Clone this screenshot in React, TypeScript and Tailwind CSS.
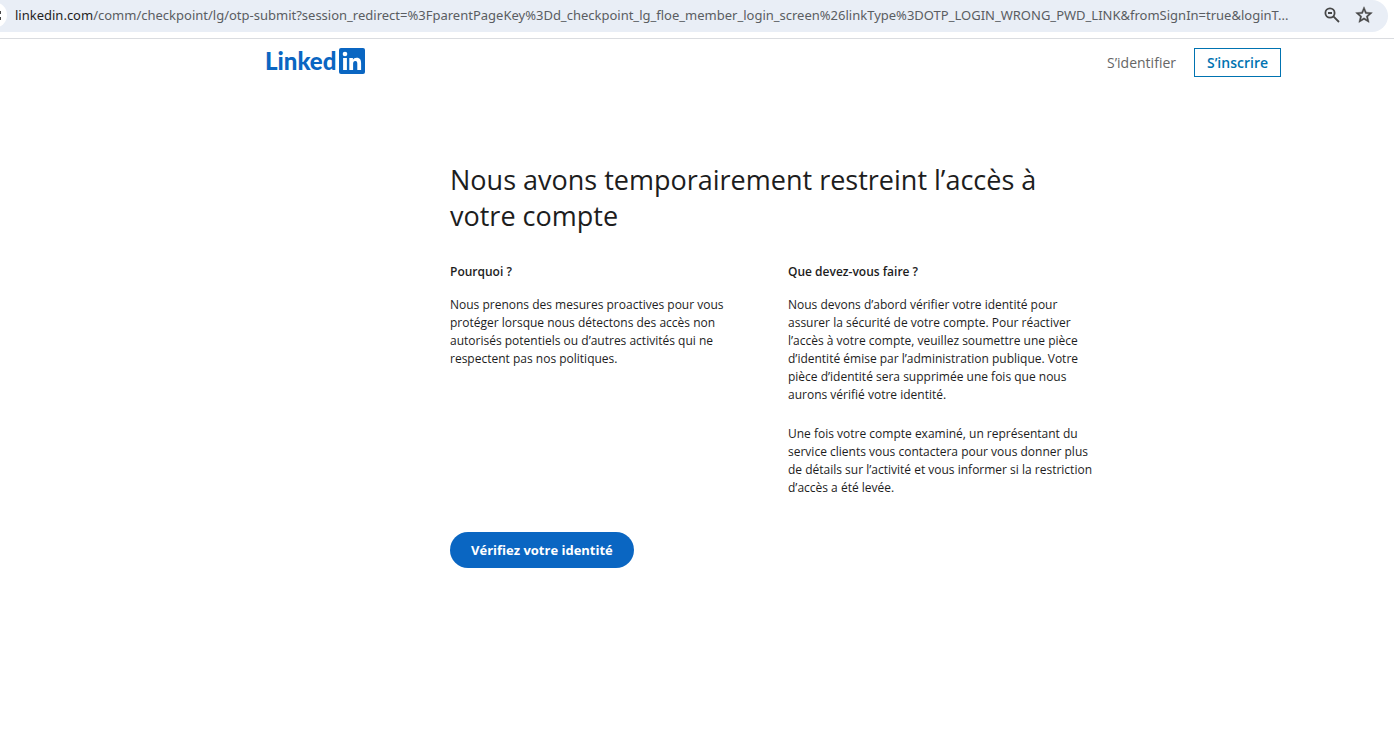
import React from "react";

function LinkedInLogo() {
  return (
    <a href="#" aria-label="LinkedIn" className="flex items-center gap-[3px] text-[#0a66c2]">
      <span className="font-['Lato',sans-serif] text-[24px] leading-[26px] font-black">Linked</span>
      <svg viewBox="0 0 26 26" className="h-[26px] w-[26px]" aria-hidden="true">
        <rect width="26" height="26" rx="2" fill="currentColor" />
        <circle cx="6" cy="6" r="2.3" fill="#fff" />
        <rect x="4.1" y="10" width="3.8" height="12" fill="#fff" />
        <path
          d="M10.3 10h3.6v1.7c.6-1.100 1.900-2 3.700-2 3.700 0 4.500 2.400 4.500 5.600V22h-3.800v-5.900c0-1.400-.1-3.200-2-3.200s-2.200 1.500-2.200 3.100v6h-3.800z"
          fill="#fff"
        />
      </svg>
    </a>
  );
}

function AddressBar() {
  return (
    <div className="border-b border-[#dadce0] pr-[6px] pb-[6px]">
      <div className="flex h-8 items-center rounded-r-full bg-[#e9eef6] pr-[14px] pb-[2px]">
        <svg viewBox="0 0 7 26" className="h-[26px] w-[7px] shrink-0" aria-hidden="true">
          <circle cx="-6" cy="13" r="13" fill="#fff" />
          <path d="M0 9h1v3H0zM0 15h1v3H0z" fill="#474747" />
        </svg>
        <div className="ml-2 flex min-w-0 flex-1 items-center font-['Noto_Sans',sans-serif] text-[13px] leading-5">
          <label htmlFor="url" className="shrink-0 text-[#1f1f1f]">
            linkedin.com
          </label>
          <input
            id="url"
            type="text"
            readOnly
            className="min-w-0 flex-1 bg-transparent text-[#5a5d62] outline-none"
            value="/comm/checkpoint/lg/otp-submit?session_redirect=%3FparentPageKey%3Dd_checkpoint_lg_floe_member_login_screen%26linkType%3DOTP_LOGIN_WRONG_PWD_LINK&fromSignIn=true&loginT..."
          />
        </div>
        <div className="flex items-center gap-3 text-[#474747]">
          <button type="button" aria-label="Zoom" className="flex h-5 w-5 items-center justify-center">
            <svg viewBox="0 0 20 20" className="h-5 w-5" fill="none" stroke="currentColor" strokeWidth="1.800">
              <circle cx="8" cy="8" r="4.600" />
              <path d="M11.400 11.400 17 17M6 8h4" />
            </svg>
          </button>
          <button type="button" aria-label="Favoris" className="flex h-5 w-5 items-center justify-center">
            <svg viewBox="0 0 24 24" className="h-5 w-5" fill="currentColor" stroke="currentColor" strokeWidth=".5">
              <path d="M22 9.240l-7.190-.62L12 2 9.190 8.630 2 9.240l5.460 4.730L5.820 21 12 17.270 18.180 21l-1.630-7.030L22 9.240zM12 15.400l-3.760 2.270 1-4.280-3.320-2.880 4.380-.38L12 6.100l1.710 4.040 4.380.38-3.320 2.880 1 4.280L12 15.400z" />
            </svg>
          </button>
        </div>
      </div>
    </div>
  );
}

export default function App() {
  return (
    <div className="min-h-screen bg-white font-['Open_Sans',sans-serif] text-[#1d1d1d]">
      <AddressBar />
      <div className="pl-[152px]">
        <header className="mx-auto flex max-w-[1034px] items-start justify-between px-[9px] pt-[9px]">
          <LinkedInLogo />
          <nav className="flex items-center gap-[18px] text-[14px]">
            <a href="#" className="text-[#666666]">
              S’identifier
            </a>
            <a
              href="#"
              className="flex h-[29px] items-center border border-[#0073b1] px-3 font-semibold text-[#0073b1]"
            >
              S’inscrire
            </a>
          </nav>
        </header>
        <main className="mx-auto max-w-[662px] px-2 pt-[85px]">
          <h1 className="text-[27px] leading-9 font-normal">
            Nous avons temporairement restreint l’accès à votre compte
          </h1>
          <div className="mt-[29px] grid grid-cols-2 gap-x-[30px] text-[12px] leading-[18px]">
            <section>
              <h2 className="font-semibold">Pourquoi ?</h2>
              <p className="mt-[15px] max-w-[280px]">
                Nous prenons des mesures proactives pour vous protéger lorsque nous détectons des accès non
                autorisés potentiels ou d’autres activités qui ne respectent pas nos politiques.
              </p>
            </section>
            <section>
              <h2 className="font-semibold">Que devez-vous faire ?</h2>
              <p className="mt-[15px]">
                Nous devons d’abord vérifier votre identité pour assurer la sécurité de votre compte. Pour
                réactiver l’accès à votre compte, veuillez soumettre une pièce d’identité émise par
                l’administration publique. Votre pièce d’identité sera supprimée une fois que nous aurons
                vérifié votre identité.
              </p>
              <p className="mt-[21px]">
                Une fois votre compte examiné, un représentant du service clients vous contactera pour vous
                donner plus de détails sur l’activité et vous informer si la restriction d’accès a été levée.
              </p>
            </section>
          </div>
          <button
            type="button"
            className="mt-[35px] h-9 rounded-full bg-[#0a66c2] px-[21px] pt-[2px] text-[13px] font-bold text-white"
          >
            Vérifiez votre identité
          </button>
        </main>
      </div>
    </div>
  );
}
